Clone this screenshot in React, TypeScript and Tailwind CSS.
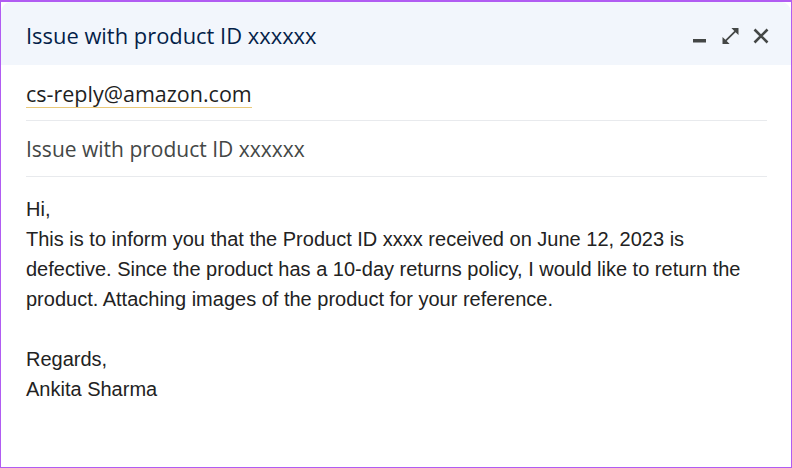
import React from "react";

export default function App() {
  const sans = { fontFamily: '"Open Sans", "Noto Sans", sans-serif' };
  return (
    <div className="w-[792px] h-[468px] bg-white border border-t-2 border-[#b15cf2] box-border overflow-hidden">
      <div className="h-[63px] bg-[#f2f6fc] rounded-t-[10px] flex items-center justify-between pl-[25px] pr-[22px] pt-[4px]">
        <div className="text-[21.9px] text-[#041e49] leading-[30px]" style={sans}>
          Issue with product ID xxxxxx
        </div>
        <div className="flex items-center">
          <svg width="13" height="16" viewBox="0 0 13 16">
            <rect x="0" y="11" width="13" height="3.5" fill="#444746" />
          </svg>
          <svg className="ml-[16px]" width="17" height="16" viewBox="3 3 18 18">
            <path d="M21 11V3h-8l3.29 3.29-10 10L3 13v8h8l-3.29-3.29 10-10z" fill="#444746" />
          </svg>
          <svg className="ml-[14px]" width="16" height="16" viewBox="0 0 16 16">
            <path d="M1.5 1.5L14.5 14.5M14.5 1.5L1.5 14.5" stroke="#444746" strokeWidth="2.6" fill="none" />
          </svg>
        </div>
      </div>
      <div className="pl-[25px] pr-[24px]">
        <div className="h-[56px] flex items-center border-b border-[#e8eaed] pt-[2px]">
          <span className="text-[21.5px] text-[#1f1f1f] leading-[27px] border-b-[1.5px] border-[#e9c97a]" style={sans}>
            cs-reply@amazon.com
          </span>
        </div>
        <div className="h-[56px] flex items-center border-b border-[#e8eaed]">
          <span className="text-[21px] text-[#444746] leading-[28px]" style={sans}>
            Issue with product ID xxxxxx
          </span>
        </div>
        <div
          className="pt-[17px] text-[20px] leading-[30px] text-[#222222]"
          style={{ fontFamily: '"Liberation Sans", Arial, sans-serif' }}
        >
          <div>Hi,</div>
          <div>
            This is to inform you that the Product ID xxxx received on June 12, 2023 is
            <br />
            defective. Since the product has a 10-day returns policy, I would like to return the
            <br />
            product. Attaching images of the product for your reference.
          </div>
          <div className="h-[30px]" />
          <div>Regards,</div>
          <div>Ankita Sharma</div>
        </div>
      </div>
    </div>
  );
}
